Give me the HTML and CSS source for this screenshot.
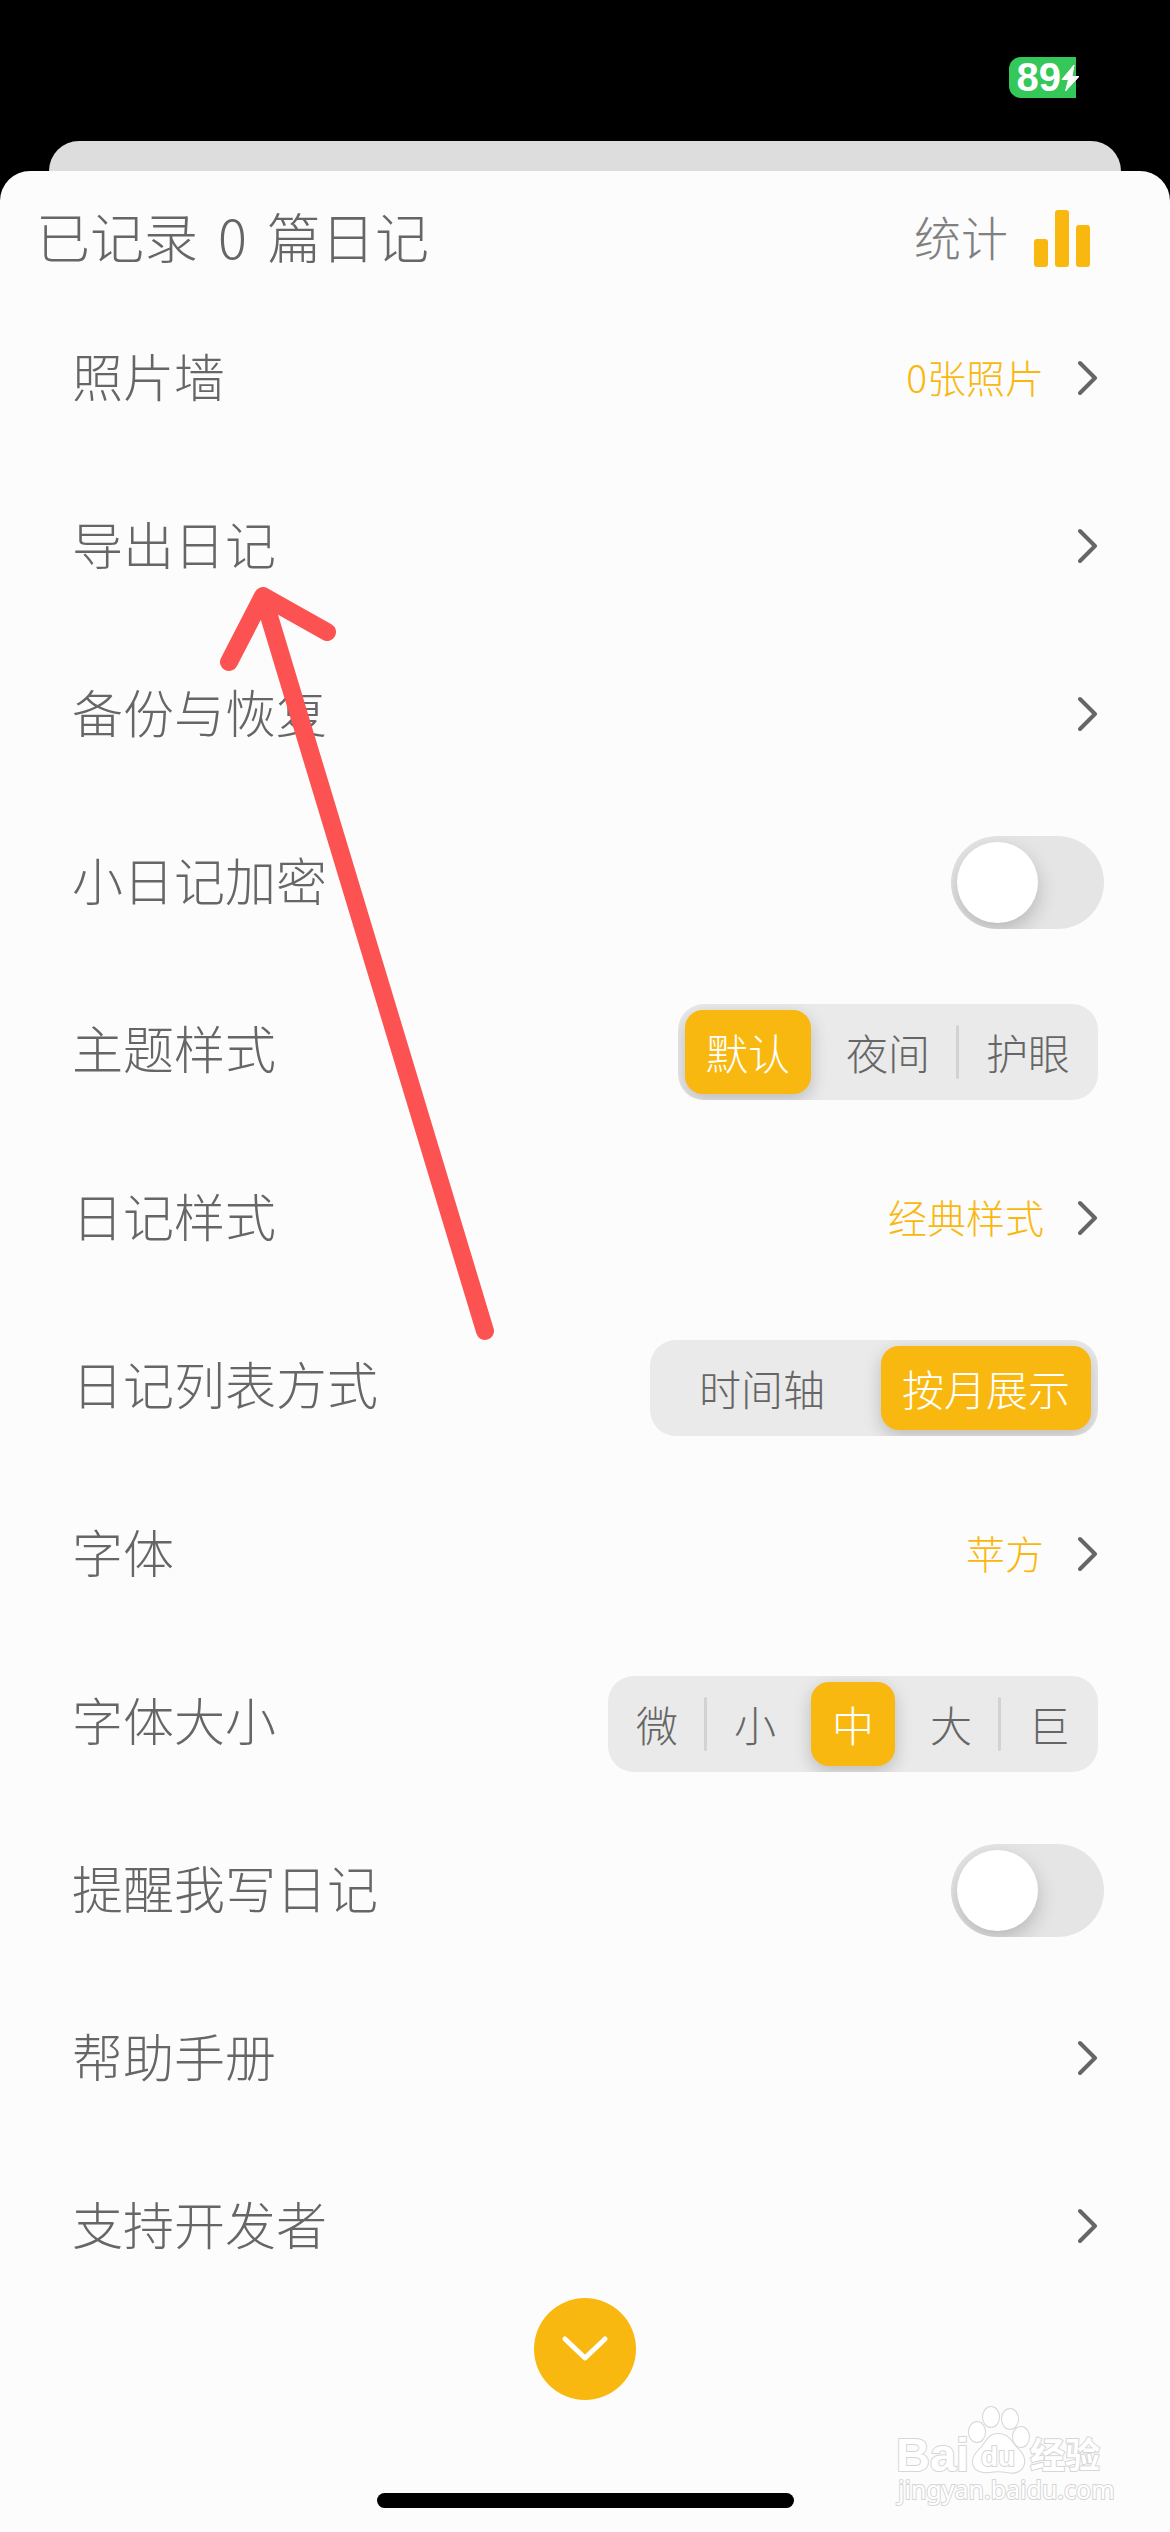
FILE: index.html
```
<!DOCTYPE html>
<html lang="zh-CN">
<head>
    <meta charset="UTF-8">
    <meta name="viewport" content="width=device-width, initial-scale=1.0">
    <title>小日记 - 设置</title>
    <link rel="stylesheet" href="styles.css">
</head>
<body>
    <div class="status-bar">
        <div class="battery">
            <span>89</span>
            <svg class="bolt" viewBox="0 0 18 27" aria-hidden="true"><path d="M13 1 1 15.500h6.500L4.500 27 18 12.500h-7z" fill="#fff" stroke="#fff" stroke-linejoin="round"/></svg>
        </div>
    </div>
    <div class="back-card"></div>

    <main class="sheet">
        <header class="sheet-header">
            <h1><span>已记录</span> <span>0</span> <span>篇日记</span></h1>
            <a class="stats" href="#stats">
                <span>统计</span>
                <svg viewBox="0 0 56 57" aria-hidden="true">
                    <rect x="0" y="29" width="14" height="28" rx="3"/>
                    <rect x="21" y="0" width="14" height="57" rx="3"/>
                    <rect x="42" y="15" width="14" height="42" rx="3"/>
                </svg>
            </a>
        </header>

        <div class="list">
            <a class="row" href="#photos">
                <span class="name">照片墙</span>
                <span class="value">0张照片</span>
                <svg class="chevron" viewBox="0 0 20 36" aria-hidden="true"><path d="M2 3l15 15L2 33"/></svg>
            </a>
            <a class="row" href="#export">
                <span class="name">导出日记</span>
                <svg class="chevron" viewBox="0 0 20 36" aria-hidden="true"><path d="M2 3l15 15L2 33"/></svg>
            </a>
            <a class="row" href="#backup">
                <span class="name">备份与恢复</span>
                <svg class="chevron" viewBox="0 0 20 36" aria-hidden="true"><path d="M2 3l15 15L2 33"/></svg>
            </a>
            <div class="row">
                <label class="name" for="lock">小日记加密</label>
                <input class="switch" type="checkbox" id="lock">
            </div>
            <div class="row" role="radiogroup" aria-labelledby="theme-name">
                <span class="name" id="theme-name">主题样式</span>
                <div class="segments">
                    <label><input type="radio" name="theme" checked><span>默认</span></label>
                    <label><input type="radio" name="theme"><span>夜间</span></label>
                    <label><input type="radio" name="theme"><span>护眼</span></label>
                </div>
            </div>
            <a class="row" href="#style">
                <span class="name">日记样式</span>
                <span class="value">经典样式</span>
                <svg class="chevron" viewBox="0 0 20 36" aria-hidden="true"><path d="M2 3l15 15L2 33"/></svg>
            </a>
            <div class="row" role="radiogroup" aria-labelledby="list-name">
                <span class="name" id="list-name">日记列表方式</span>
                <div class="segments">
                    <label><input type="radio" name="list"><span>时间轴</span></label>
                    <label><input type="radio" name="list" checked><span>按月展示</span></label>
                </div>
            </div>
            <a class="row" href="#font">
                <span class="name">字体</span>
                <span class="value">苹方</span>
                <svg class="chevron" viewBox="0 0 20 36" aria-hidden="true"><path d="M2 3l15 15L2 33"/></svg>
            </a>
            <div class="row" role="radiogroup" aria-labelledby="size-name">
                <span class="name" id="size-name">字体大小</span>
                <div class="segments">
                    <label><input type="radio" name="size"><span>微</span></label>
                    <label><input type="radio" name="size"><span>小</span></label>
                    <label><input type="radio" name="size" checked><span>中</span></label>
                    <label><input type="radio" name="size"><span>大</span></label>
                    <label><input type="radio" name="size"><span>巨</span></label>
                </div>
            </div>
            <div class="row">
                <label class="name" for="remind">提醒我写日记</label>
                <input class="switch" type="checkbox" id="remind">
            </div>
            <a class="row" href="#help">
                <span class="name">帮助手册</span>
                <svg class="chevron" viewBox="0 0 20 36" aria-hidden="true"><path d="M2 3l15 15L2 33"/></svg>
            </a>
            <a class="row" href="#support">
                <span class="name">支持开发者</span>
                <svg class="chevron" viewBox="0 0 20 36" aria-hidden="true"><path d="M2 3l15 15L2 33"/></svg>
            </a>
        </div>

        <button class="close-btn" type="button" aria-label="收起">
            <svg viewBox="0 0 48 28" aria-hidden="true"><path d="M4 4l20 19L44 4"/></svg>
        </button>
        <div class="home-bar"></div>

        <!-- hand-drawn arrow over the list -->
        <svg class="arrow" viewBox="0 0 280 762" aria-hidden="true">
            <path d="M9 78 43 12 107 48M43 12 265 747"/>
        </svg>

        <svg class="watermark" viewBox="0 0 310 152" role="img" aria-label="Baidu 经验">
            <text class="wm-latin" x="36" y="91">Bai</text>
            <g class="wm-paw">
                <ellipse cx="117" cy="52" rx="8" ry="10"/>
                <ellipse cx="131" cy="37" rx="8" ry="10"/>
                <ellipse cx="150" cy="39" rx="8" ry="10"/>
                <ellipse cx="161" cy="57" rx="8" ry="10"/>
                <path d="M138 54c10 0 14 8 18 13 5 5 9 9 8 16-1 8-9 11-17 9-6-1-12-1-18 0-8 1-16-2-16-10 0-6 4-10 9-15 4-5 7-13 16-13z"/>
            </g>
            <text class="wm-du" x="121" y="86">du</text>
            <text class="wm-cn" x="170" y="88">经验</text>
            <text class="wm-url" x="38" y="119">jingyan.baidu.com</text>
        </svg>
    </main>
</body>
</html>
```

FILE: styles.css
```
* {
    box-sizing: border-box;
}
body {
    margin: 0;
    min-height: 100vh;
    display: flex;
    flex-direction: column;
    background-color: #000;
    color: #666;
    font-family: "Noto Sans CJK SC", sans-serif;
    font-weight: 300;
}
a {
    color: inherit;
    text-decoration: none;
}
.status-bar {
    display: flex;
    justify-content: flex-end;
    align-items: flex-start;
    height: 141px;
    padding: 57px 91px 0 0;
}
.battery {
    display: flex;
    align-items: center;
    height: 41px;
    padding-left: 8px;
    border-radius: 12px 0 0 12px;
    background: linear-gradient(to left, transparent 3px, #34c759 3px);
    color: #fff;
    font: bold 40px "Liberation Sans", sans-serif;
}
.bolt {
    width: 18px;
    height: 27px;
}
.back-card {
    height: 30px;
    margin: 0 49px;
    border-radius: 30px 30px 0 0;
    background-color: #ddd;
}
.sheet {
    position: relative;
    flex: 1;
    display: flex;
    flex-direction: column;
    align-items: center;
    padding-bottom: 24px;
    border-radius: 30px 30px 0 0;
    background-color: #fcfcfc;
}
.sheet-header {
    display: flex;
    justify-content: space-between;
    align-items: center;
    align-self: stretch;
    height: 123px;
    padding: 12px 80px 0 36px;
}
h1 {
    display: flex;
    gap: 20px;
    margin: 0;
    padding-bottom: 6px;
    font-size: 54px;
    font-weight: 300;
}
.stats {
    display: flex;
    align-items: center;
    gap: 26px;
    color: #808080;
    font-size: 47px;
}
.stats span {
    padding-bottom: 6px;
}
.stats svg {
    width: 56px;
    height: 57px;
    fill: #f9b80f;
}
.list {
    align-self: stretch;
}
.row {
    display: flex;
    align-items: center;
    height: 168px;
    padding: 0 72px;
}
.name {
    flex: 1;
    padding-bottom: 6px;
    font-size: 51px;
}
.value {
    margin-right: 34px;
    padding-bottom: 4px;
    color: #f9b80f;
    font-size: 39px;
}
.chevron {
    width: 20px;
    height: 36px;
}
.chevron path {
    fill: none;
    stroke: #666;
    stroke-width: 4;
    stroke-linecap: round;
    stroke-linejoin: round;
}

/* toggle */
.switch {
    appearance: none;
    width: 153px;
    height: 93px;
    margin: 0 -6px 0 0;
    padding: 6px;
    border-radius: 47px;
    background-color: #e5e5e5;
    overflow: hidden;
    cursor: pointer;
}
.switch::before {
    content: "";
    display: block;
    width: 81px;
    height: 81px;
    border-radius: 50%;
    background-color: #fff;
    box-shadow: 0 8px 20px rgba(0,0,0,0.2);
}
.switch:checked {
    background-color: #f9b80f;
}
.switch:checked::before {
    margin-left: 60px;
}

/* segmented control */
.segments {
    display: grid;
    grid-auto-flow: column;
    grid-auto-columns: 1fr;
    height: 96px;
    margin-top: 4px;
    border-radius: 26px;
    background-color: #eaeaea;
    overflow: hidden;
}
.segments label {
    display: flex;
    align-items: center;
    position: relative;
    cursor: pointer;
}
.segments input {
    position: absolute;
    opacity: 0;
}
.segments span {
    flex: 1;
    margin: 0 7px;
    padding: 0 21px;
    border-radius: 18px;
    font-size: 42px;
    line-height: 84px;
    text-align: center;
    white-space: nowrap;
}
.segments input:checked + span {
    background-color: #f9b80f;
    box-shadow: 0 6px 18px rgba(0,0,0,0.2);
    color: #fff;
}
.segments label:not(:last-child)::after {
    content: "";
    position: absolute;
    right: -1px;
    width: 3px;
    height: 54px;
    border-radius: 2px;
    background-color: #d2d2d2;
}
.segments label:has(:checked)::after,
.segments label:has(+ label :checked)::after {
    display: none;
}

.close-btn {
    display: flex;
    align-items: center;
    justify-content: center;
    width: 102px;
    height: 102px;
    margin-top: -12px;
    padding: 0;
    border: none;
    border-radius: 50%;
    background-color: #f9b80f;
    cursor: pointer;
}
.close-btn svg {
    width: 48px;
    height: 28px;
}
.close-btn path {
    fill: none;
    stroke: #fff;
    stroke-width: 5;
    stroke-linecap: round;
    stroke-linejoin: round;
}
.home-bar {
    width: 417px;
    height: 15px;
    margin-top: auto;
    border-radius: 8px;
    background-color: #000;
}

.arrow {
    position: absolute;
    top: 413px;
    left: 220px;
    width: 280px;
    height: 762px;
    pointer-events: none;
}
.arrow path {
    fill: none;
    stroke: #fc5252;
    stroke-width: 18;
    stroke-linecap: round;
    stroke-linejoin: round;
}

.watermark {
    position: absolute;
    right: 0;
    bottom: 0;
    width: 310px;
    height: 152px;
    fill: #fff;
    stroke: #d6d6d6;
    stroke-width: 2;
    paint-order: stroke;
    pointer-events: none;
}
.wm-latin {
    font: bold 47px "Liberation Sans", sans-serif;
}
.wm-du {
    font: bold 28px "Liberation Sans", sans-serif;
}
.wm-cn {
    font: bold 35px "Noto Sans CJK SC", sans-serif;
}
.wm-url {
    font: 25px "Noto Sans", sans-serif;
}
```
